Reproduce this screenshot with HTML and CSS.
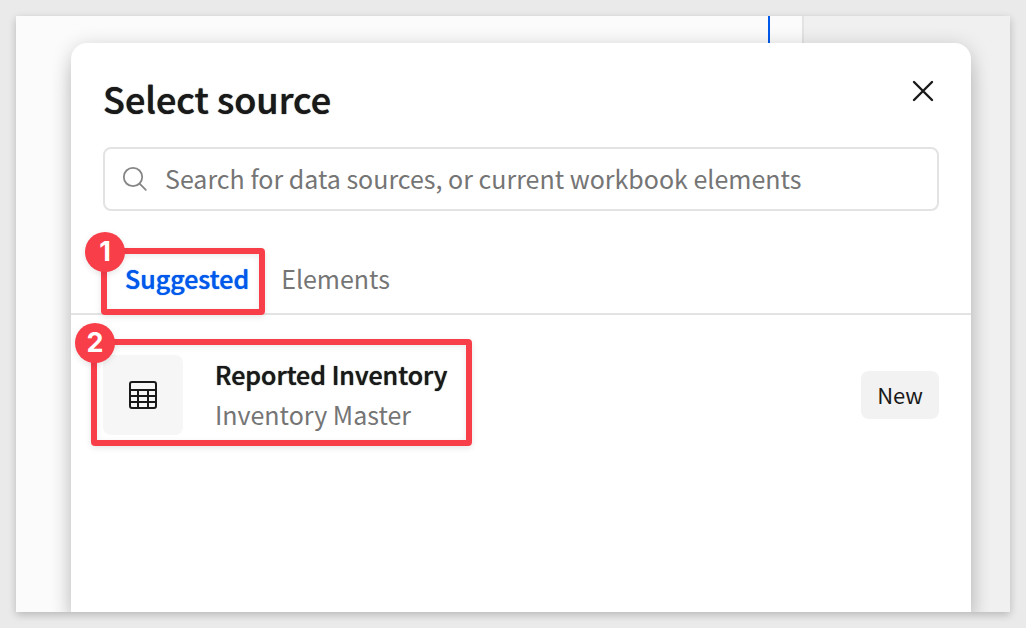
FILE: index.html
```html
<!DOCTYPE html>
<html lang="en">
<head>
<meta charset="utf-8">
<meta name="viewport" content="width=device-width, initial-scale=1">
<title>Select source</title>
<link rel="stylesheet" href="styles.css">
</head>
<body>
<div class="window">
  <div class="page" aria-hidden="true"><div class="guide"></div></div>
  <section class="dialog" role="dialog" aria-labelledby="dialog-title">
    <header class="header">
      <h1 class="title" id="dialog-title">Select source</h1>
      <button class="close" type="button" aria-label="Close">
        <svg width="24" height="24" viewBox="0 0 24 24" fill="none" stroke="currentColor" stroke-width="2.4" stroke-linecap="round"><path d="M3 3l18 18M21 3L3 21"/></svg>
      </button>
    </header>
    <label class="search">
      <svg class="search-icon" width="26" height="26" viewBox="0 0 26 26" fill="none" stroke="currentColor" stroke-width="1.8" stroke-linecap="round"><circle cx="11" cy="11" r="9.2"/><path d="M17.8 17.8l6 6"/></svg>
      <input class="search-input" type="text" aria-label="Search sources" placeholder="Search for data sources, or current workbook elements">
    </label>
    <nav class="tabs" role="tablist">
      <div class="callout-anchor">
        <button class="tab tab-active" type="button" role="tab" aria-selected="true">Suggested</button>
        <div class="callout callout-tab"><span class="badge">1</span></div>
      </div>
      <button class="tab" type="button" role="tab" aria-selected="false">Elements</button>
    </nav>
    <div class="source">
      <div class="callout-anchor source-info">
        <div class="thumb">
          <svg width="28" height="28" viewBox="0 0 28 28" fill="none" stroke="currentColor" stroke-width="2"><rect x="1" y="1" width="26" height="26" rx="2"/><path d="M1 9h26M1 15h26M1 21h26M9 9v18M19 9v18"/></svg>
        </div>
        <div class="source-text">
          <div class="source-name">Reported Inventory</div>
          <div class="source-path">Inventory Master</div>
        </div>
        <div class="callout callout-source"><span class="badge">2</span></div>
      </div>
      <button class="new" type="button">New</button>
    </div>
  </section>
</div>
</body>
</html>
```
FILE: styles.css
```css
* { box-sizing: border-box; }

body {
  margin: 0;
  height: 100vh;
  padding: 16px;
  background: #eaeaea;
  color: #191919;
  font-family: "Noto Sans CJK SC", "Noto Sans", sans-serif;
  font-size: 25px;
  line-height: 40px;
}

button, input { font: inherit; color: inherit; border: 0; background: none; padding: 0; }
button { cursor: pointer; }
svg { display: block; flex: none; }

.window {
  position: relative;
  display: flex;
  height: calc(100vh - 32px);
  padding: 27px 39px 0 55px;
  overflow: hidden;
  background: #f0f0f0;
}
body::before {
  content: "";
  position: absolute;
  inset: 16px;
  box-shadow: 0 3px 8px rgba(0, 0, 0, 0.2), 0 0 14px rgba(0, 0, 0, 0.02);
}

.page {
  position: absolute;
  inset: 0 206px 0 0;
  display: flex;
  justify-content: flex-end;
  padding-right: 32px;
  border-right: 2px solid #e3e3e3;
  background: #fbfbfb;
}
.guide { width: 2px; background: #0059eb; }

.dialog {
  position: relative;
  flex: 1;
  border-radius: 16px 16px 0 0;
  background: #fff;
  box-shadow: 0 20px 20px rgba(0, 0, 0, 0.12), 0 3px 20px rgba(0, 0, 0, 0.18);
}

.header {
  display: flex;
  justify-content: space-between;
  align-items: flex-start;
  padding: 32px 36px 26px 32px;
}
.title { margin: 0; font-size: 36px; line-height: 46px; }
.title, .tab-active, .source-name {
  font-weight: 500;
  text-shadow: 0 0 1px currentColor;
}
.close { padding: 4px 0; }

.search {
  display: flex;
  align-items: center;
  gap: 17px;
  height: 64px;
  margin: 0 32px;
  padding: 0 17px;
  border: 2px solid #e3e3e3;
  border-radius: 8px;
}
.search-icon { color: #868686; }
.search-input { flex: 1; min-width: 0; padding-bottom: 2px; outline: 0; }
.search-input::placeholder { color: #757575; opacity: 1; }

.tabs {
  display: flex;
  gap: 32px;
  padding: 47px 54px 15px;
  border-bottom: 2px solid #e3e3e3;
}
.tab { display: block; color: #757575; }
.tab-active { color: #0059eb; }

.source {
  display: flex;
  align-items: center;
  justify-content: space-between;
  padding: 40px 32px;
}
.source-info { display: flex; align-items: center; gap: 32px; height: 80px; }
.source-text { padding-bottom: 2px; }
.thumb {
  display: grid;
  place-items: center;
  width: 80px;
  height: 80px;
  border-radius: 8px;
  background: #f6f6f6;
}
.source-path { color: #757575; }
.new {
  height: 48px;
  padding: 0 16px 2px;
  border-radius: 8px;
  background: #f2f2f2;
  font-size: 22px;
}

.callout-anchor { position: relative; }
.callout {
  position: absolute;
  border: 6px solid #f83e49;
  border-radius: 4px;
  box-shadow: 0 2px 6px rgba(0, 0, 0, 0.1), inset 0 2px 6px rgba(0, 0, 0, 0.08);
  pointer-events: none;
}
.callout-tab { inset: -10px -16px -17px -24px; }
.callout-source { inset: -16px -25px -11px -12px; }
.badge {
  position: absolute;
  top: -22px;
  left: -22px;
  width: 40px;
  height: 40px;
  border-radius: 50%;
  background: #f83e49;
  color: #fff;
  font-family: Inter, sans-serif;
  font-size: 27px;
  font-weight: 700;
  text-align: center;
  box-shadow: 0 2px 6px rgba(0, 0, 0, 0.1);
}
```
